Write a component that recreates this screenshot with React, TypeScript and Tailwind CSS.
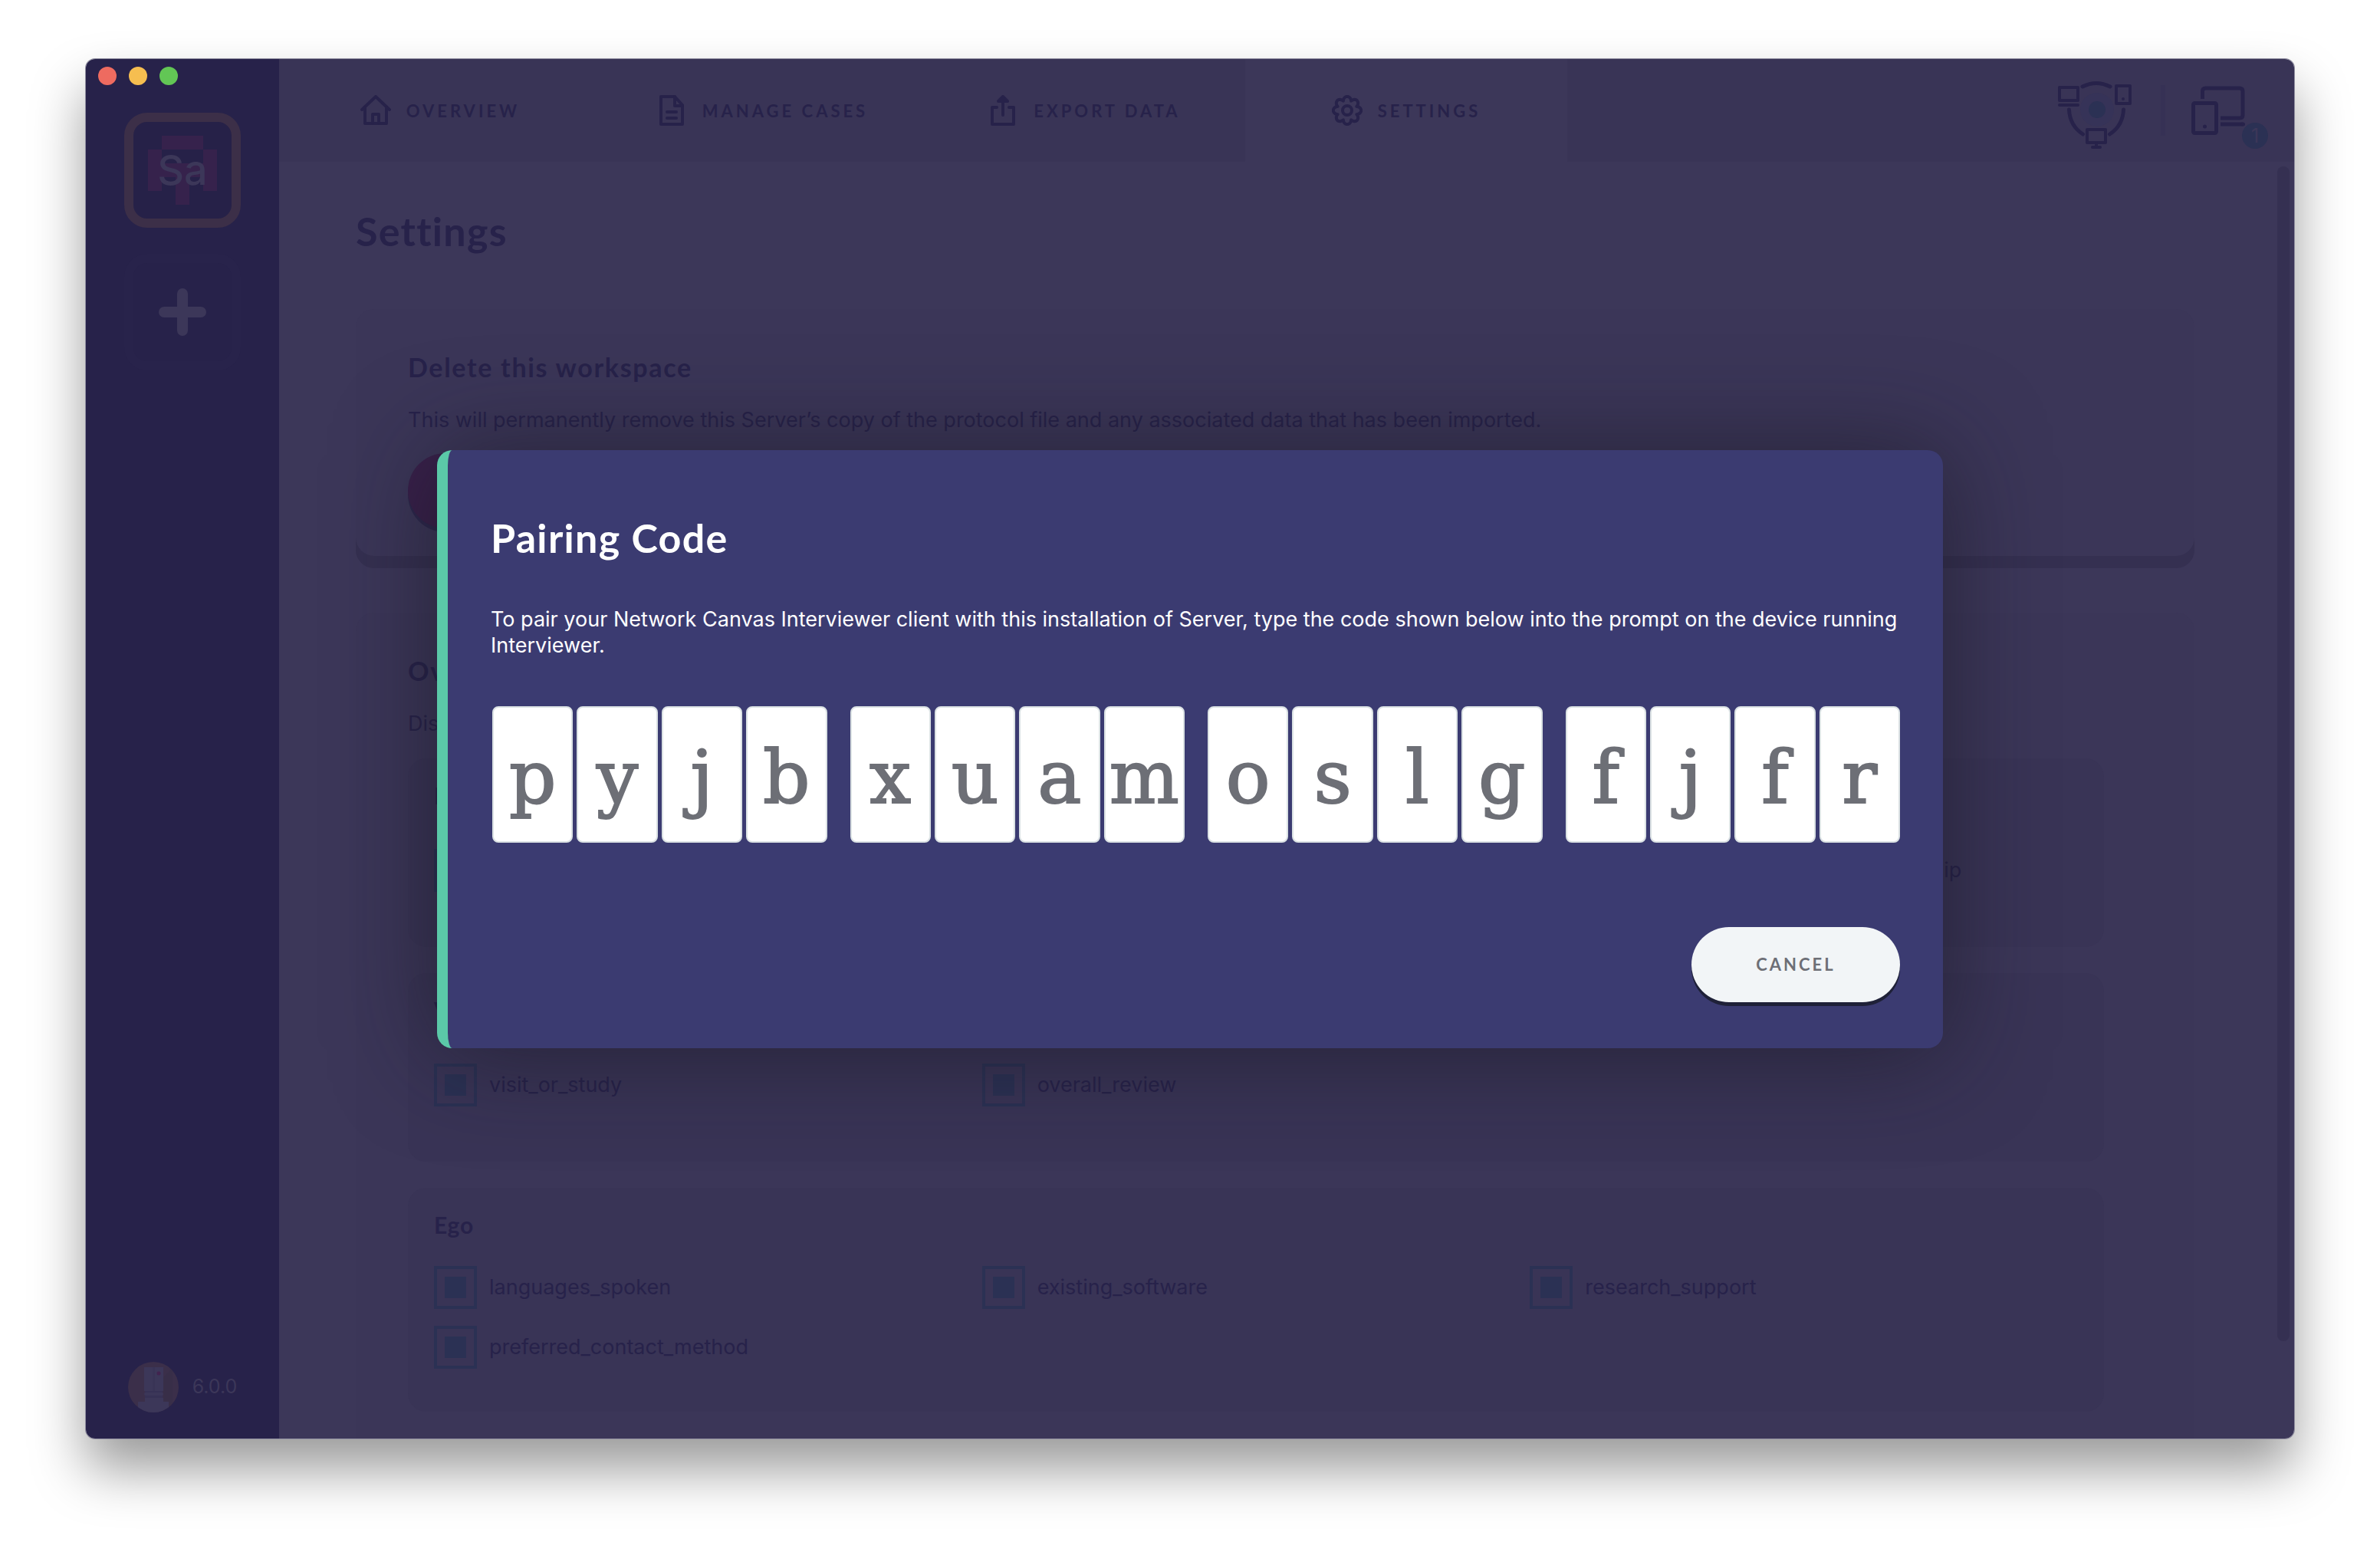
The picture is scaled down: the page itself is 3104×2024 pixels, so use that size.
import React from "react";

const heading = "font-['Lato',sans-serif] font-bold text-[#27224a]";

function HomeIcon() {
  return (
    <svg className="size-10" viewBox="0 0 40 40" fill="none" stroke="#27224a" strokeWidth="4" strokeLinecap="round" strokeLinejoin="round" aria-hidden="true">
      <path d="M2 19 20 2l18 17" />
      <path d="M6 16v21h28V16" />
      <path d="M16 36V25h8v11" />
    </svg>
  );
}

function FileIcon() {
  return (
    <svg className="size-10" viewBox="0 0 40 40" fill="none" stroke="#27224a" strokeWidth="4" strokeLinecap="round" strokeLinejoin="round" aria-hidden="true">
      <path d="M6 2h18l10 11v25H6z" />
      <path d="M24 2v12h10" />
      <path d="M14 22h12M14 30h12" />
    </svg>
  );
}

function ExportIcon() {
  return (
    <svg className="size-10" viewBox="0 0 40 40" fill="none" stroke="#27224a" strokeWidth="4" strokeLinecap="round" strokeLinejoin="round" aria-hidden="true">
      <path d="M12 16H6v22h28V16h-6" />
      <path d="M20 26V3M14 8l6-6 6 6z" />
    </svg>
  );
}

const gearPath =
  Array.from({ length: 97 }, (_, i) => {
    const a = (i / 96) * Math.PI * 2;
    const r = 13.4 + 4.8 * Math.pow(Math.abs(Math.cos(4 * a)), 0.8);
    return `${i === 0 ? "M" : "L"}${(20 + r * Math.sin(a)).toFixed(2)} ${(20 - r * Math.cos(a)).toFixed(2)}`;
  }).join("") + "Z";

function GearIcon() {
  return (
    <svg className="size-10" viewBox="0 0 40 40" fill="none" stroke="#27224a" strokeWidth="4" strokeLinejoin="round" aria-hidden="true">
      <path d={gearPath} />
      <circle cx="20" cy="20" r="6" />
    </svg>
  );
}

function NetworkIcon() {
  return (
    <svg className="h-[102px] w-24" viewBox="0 -12 96 102" fill="none" stroke="#27224a" strokeWidth="4" strokeLinecap="round" strokeLinejoin="round" aria-hidden="true">
      <circle cx="51" cy="38" r="22" fill="#363358" stroke="none" />
      <circle cx="51" cy="38" r="11" fill="#2b3154" stroke="none" />
      <path d="M32 8q18-9 36 0" strokeWidth="5" />
      <path d="M14.500 38q1 21 18 32M85.500 38q-1 21-18 32" strokeWidth="5" />
      <rect x="2" y="9" width="24" height="17" />
      <path d="M2 32h24" />
      <rect x="76" y="7" width="18" height="23" />
      <circle cx="85" cy="24" r="2" fill="#27224a" stroke="none" />
      <rect x="38" y="64" width="24" height="17" />
      <path d="M45 87h10M50 82v4" />
    </svg>
  );
}

function DevicesIcon() {
  return (
    <svg className="h-16 w-[70px]" viewBox="0 0 70 64" fill="none" stroke="#27224a" strokeWidth="5" aria-hidden="true">
      <path d="M14.500 17V7q0-4 4-4H63q4 0 4 4v31q0 4-4 4H38" />
      <path d="M38 50h29" />
      <path d="M67 50h.5" strokeLinecap="round" />
      <rect x="2.500" y="22.500" width="30" height="39" rx="2" />
      <circle cx="17.500" cy="53" r="2.500" fill="#27224a" stroke="none" />
    </svg>
  );
}

function ServerLogo() {
  return (
    <svg className="size-[66px]" viewBox="0 0 66 66" aria-hidden="true">
      <clipPath id="logo-disc">
        <circle cx="33" cy="33" r="33" />
      </clipPath>
      <g clipPath="url(#logo-disc)">
        <rect width="66" height="66" fill="#3b2f4a" />
        <path d="M46 20 58 8v58H46z" fill="#382e48" />
        <rect x="21" y="7" width="25" height="31" fill="#3c3759" />
        <rect x="32" y="7" width="3" height="31" fill="#393456" />
        <rect x="22" y="38" width="23" height="16" fill="#363155" />
        <rect x="21" y="40" width="25" height="4" rx="2" fill="#3c3759" />
        <rect x="22" y="47" width="24" height="5" fill="#3c3759" />
        <rect x="13" y="52" width="40" height="14" fill="#3c3759" />
        <circle cx="40" cy="15" r="2.500" fill="#42234f" />
      </g>
    </svg>
  );
}

function WorkspaceGlyph() {
  const cells = [
    [1, 0], [2, 0], [3, 0],
    [0, 1], [4, 1],
    [0, 2], [1, 2], [2, 2], [3, 2], [4, 2],
    [0, 3], [2, 3], [4, 3],
    [2, 4],
  ];
  return (
    <svg className="size-[90px]" viewBox="0 0 90 90" fill="#36224c" shapeRendering="crispEdges" aria-hidden="true">
      {cells.map(([x, y]) => (
        <rect key={`${x}-${y}`} x={x * 18} y={y * 18} width="18" height="18" />
      ))}
    </svg>
  );
}

const tabs = [
  { label: "Overview", icon: <HomeIcon /> },
  { label: "Manage cases", icon: <FileIcon /> },
  { label: "Export data", icon: <ExportIcon /> },
  { label: "Settings", icon: <GearIcon />, active: true },
];

function Sidebar() {
  return (
    <aside className="flex w-[252px] shrink-0 flex-col items-center bg-[#27224a]">
      <div className="flex gap-4 self-start pt-[10px] pl-4">
        <span className="size-6 rounded-full bg-[#ee6b60]" />
        <span className="size-6 rounded-full bg-[#f6be50]" />
        <span className="size-6 rounded-full bg-[#62c655]" />
      </div>
      <button type="button" aria-label="Sample workspace" className="mt-9 grid h-[150px] w-[152px] place-items-center rounded-[30px] border-12 border-[#3c2f48] bg-[#262148]">
        <span className="col-start-1 row-start-1"><WorkspaceGlyph /></span>
        <span className="z-10 col-start-1 row-start-1 font-['Inter',sans-serif] text-[54px] leading-none font-medium text-[#3c3759]">Sa</span>
      </button>
      <button type="button" aria-label="Add workspace" className="mt-[34px] grid size-[152px] place-items-center rounded-[30px] border-12 border-[#28234b]">
        <svg className="size-[62px]" viewBox="0 0 62 62" stroke="#3c3759" strokeWidth="14" strokeLinecap="round" aria-hidden="true">
          <path d="M31 7v48M7 31h48" />
        </svg>
      </button>
      <div className="mt-auto flex items-center gap-[18px] pb-[34px]">
        <ServerLogo />
        <span className="font-['Inter',sans-serif] text-[25px] text-[#3c3759]">6.0.0</span>
      </div>
    </aside>
  );
}

function Header() {
  return (
    <header className="flex h-[134px] shrink-0 items-stretch justify-between bg-[#393456]">
      <nav className="flex">
        {tabs.map((t) => (
          <a
            key={t.label}
            href="#"
            className={`flex w-[420px] items-center justify-center gap-5 font-['Lato',sans-serif] text-[22px] font-bold tracking-[4px] text-[#27224a] uppercase ${t.active ? "bg-[#3c3759]" : ""}`}
          >
            {t.icon}
            {t.label}
          </a>
        ))}
      </nav>
      <div className="flex items-center pr-16">
        <NetworkIcon />
        <span className="mr-[34px] ml-[38px] h-[66px] w-[6px] bg-[#363155]" />
        <div className="relative">
          <DevicesIcon />
          <span className="absolute top-12 left-[66px] grid size-[34px] place-items-center rounded-full bg-[#2b3154] font-['Inter',sans-serif] text-[26px] leading-none text-[#3c3759]">1</span>
        </div>
      </div>
    </header>
  );
}

function CheckGroup({ title, items, tall }: { title: string; items: string[]; tall?: boolean }) {
  return (
    <fieldset className={`rounded-3xl bg-[#393456] px-[34px] pt-[30px] ${tall ? "pb-[72px]" : "pb-14"}`}>
      <h4 className={`${heading} text-[30px] leading-[36px] tracking-wide`}>{title}</h4>
      <div className={`grid grid-cols-3 gap-y-[22px] ${tall ? "mt-[52px]" : "mt-9"}`}>
        {items.map((name) => (
          <label key={name} className="flex items-center gap-4 font-['Inter',sans-serif] text-[27px] whitespace-nowrap text-[#27224a]">
            <input
              type="checkbox"
              defaultChecked
              className="size-14 appearance-none border-4 border-[#2b3154] bg-clip-content p-[10px] checked:bg-[#2b3154]"
            />
            {name}
          </label>
        ))}
      </div>
    </fieldset>
  );
}

function SettingsPage() {
  return (
    <main className="relative flex-1 overflow-hidden bg-[#3c3759] pt-[58px] pr-[130px] pl-[100px]">
      <h1 className={`${heading} text-[52px] leading-[64px] tracking-wide`}>Settings</h1>

      <section className="mt-[70px] rounded-3xl bg-[#3b3658] px-[68px] pt-[54px] pb-[36px] shadow-[0_16px_0_#353051]">
        <h2 className={`${heading} text-[34px] leading-[44px] tracking-wider`}>Delete this workspace</h2>
        <p className="mt-[30px] font-['Inter',sans-serif] text-[27px] leading-[34px] text-[#27224a]">
          This will permanently remove this Server&rsquo;s copy of the protocol file and any associated data that has been imported.
        </p>
        <button type="button" className="mt-[26px] h-[98px] rounded-full bg-[#38204a] px-16 text-[#3c3759] shadow-[0_5px_0_#2c274c]">
          Delete
        </button>
      </section>

      <section className="mt-[74px] rounded-3xl bg-[#3b3658] pt-[54px] pr-[118px] pb-20 pl-[68px]">
        <h2 className={`${heading} text-[34px] leading-[44px] tracking-wider`}>Overview</h2>
        <p className="mt-[30px] font-['Inter',sans-serif] text-[27px] leading-[34px] text-[#27224a]">Display charts</p>
        <div className="mt-[28px] flex flex-col gap-[34px]">
          <CheckGroup tall title="Person" items={["gender", "role", "perceived_quality_of_their_relationship"]} />
          <CheckGroup tall title="Visit" items={["visit_or_study", "overall_review"]} />
          <CheckGroup title="Ego" items={["languages_spoken", "existing_software", "research_support", "preferred_contact_method"]} />
        </div>
      </section>

      <div className="absolute top-[6px] right-[6px] bottom-[127px] w-4 rounded-full bg-[#353052]" />
    </main>
  );
}

function PairingDialog() {
  const groups = ["pyjb", "xuam", "oslg", "fjfr"];
  return (
    <div className="absolute inset-0 flex items-center justify-center">
      <div
        role="dialog"
        aria-modal="true"
        aria-labelledby="pairing-title"
        className="w-full max-w-[1964px] rounded-[20px] border-l-14 border-[#5bc9a8] bg-[#3b3b71] pt-[84px] pb-[60px] pl-14 shadow-[0_4px_130px_rgba(24,22,32,0.6)]"
      >
        <h2 id="pairing-title" className="font-['Lato',sans-serif] text-[52px] leading-[60px] font-bold tracking-wide text-white">
          Pairing Code
        </h2>
        <p className="mt-[60px] pr-4 font-['Inter',sans-serif] text-[27px] leading-[34px] text-white">
          To pair your Network Canvas Interviewer client with this installation of Server, type the code shown below into the prompt on the device running Interviewer.
        </p>
        <div className="mt-[62px] mr-14 ml-0.5 flex gap-[30px]">
          {groups.map((g) => (
            <div key={g} className="flex flex-1 gap-[5px]">
              {g.split("").map((c, i) => (
                <span key={i} className="flex h-[178px] w-0 flex-1 items-center justify-center rounded-lg border-2 border-[#dbe2e4] bg-white pt-2 font-['DejaVu_Serif',serif] text-[96px] leading-none text-[#6d6f76] [-webkit-text-stroke:2px_#6d6f76]">
                  {c}
                </span>
              ))}
            </div>
          ))}
        </div>
        <div className="mt-[110px] mr-14 flex justify-end">
          <button type="button" className="h-[98px] w-[272px] rounded-full bg-[#f2f5f7] font-['Lato',sans-serif] text-[22px] font-bold tracking-[3px] text-[#6d6f76] uppercase shadow-[0_5px_0_#1f2138]">
            Cancel
          </button>
        </div>
      </div>
    </div>
  );
}

export default function App() {
  return (
    <div className="flex h-screen bg-white px-28 pt-[77px] pb-[148px]">
      <div className="flex flex-1 rounded-xl shadow-[0_0_0_1px_#8f8d9f,0_40px_70px_rgba(0,0,0,0.4)]">
        <div className="relative flex flex-1 overflow-hidden rounded-xl">
          <Sidebar />
          <div className="flex min-w-0 flex-1 flex-col">
            <Header />
            <SettingsPage />
          </div>
          <PairingDialog />
        </div>
      </div>
    </div>
  );
}
